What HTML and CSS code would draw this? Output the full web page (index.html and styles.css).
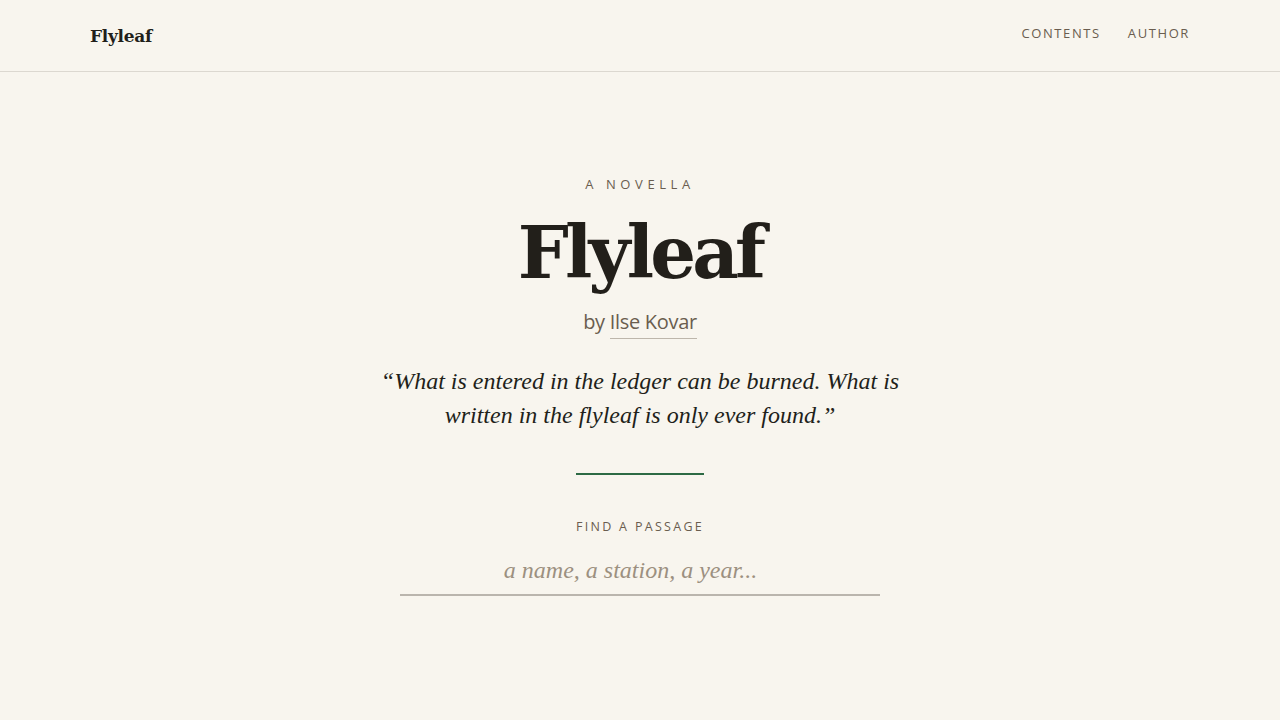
FILE: index.html
```html
<!DOCTYPE html>
<html lang="en">
<head>
<meta charset="utf-8">
<title>Flyleaf</title>
<link rel="stylesheet" href="styles.css">
</head>
<body>
<header class="site-header">
  <div class="header-inner">
    <a class="brand" href="#">Flyleaf</a>
    <nav class="nav">
      <a href="#">Contents</a>
      <a href="#">Author</a>
    </nav>
  </div>
</header>
<main class="hero">
  <p class="kicker">A Novella</p>
  <h1 class="title">Flyleaf</h1>
  <p class="byline">by <a href="#">Ilse Kovar</a></p>
  <blockquote class="epigraph">“What is entered in the ledger can be burned. What is written in the flyleaf is only ever found.”</blockquote>
  <hr class="rule">
  <label class="search-label" for="q">Find a passage</label>
  <input class="search" id="q" type="text" placeholder="a name, a station, a year...">
</main>
</body>
</html>
```
FILE: styles.css
```css
* { box-sizing: border-box; }
html, body { margin: 0; padding: 0; }
body {
  background: #f8f5ee;
  color: #221f1a;
  font-family: "Liberation Serif", "DejaVu Serif", serif;
  min-height: 720px;
}
a { color: inherit; text-decoration: none; }

.site-header {
  border-bottom: 1px solid #dcd8d0;
}
.header-inner {
  max-width: 1100px;
  margin: 0 auto;
  height: 71px;
  display: flex;
  align-items: center;
  justify-content: space-between;
}
.brand {
  font-family: "DejaVu Serif", serif;
  font-weight: bold;
  font-size: 17px;
  color: #221f1a;
  letter-spacing: -0.3px;
}
.nav {
  display: flex;
  gap: 27px;
  margin-top: -6px;
}
.nav a {
  font-family: "Open Sans", sans-serif;
  font-size: 13px;
  letter-spacing: 1.6px;
  text-transform: uppercase;
  color: #6a5d4f;
}

.hero {
  display: flex;
  flex-direction: column;
  align-items: center;
  padding-top: 103px;
  text-align: center;
}
.kicker {
  margin: 0;
  font-family: "Open Sans", sans-serif;
  font-size: 13px;
  letter-spacing: 4.6px;
  text-transform: uppercase;
  color: #6a5d4f;
  line-height: 18px;
}
.title {
  margin: 10px 0 0;
  font-family: "DejaVu Serif", serif;
  font-weight: bold;
  font-size: 72px;
  line-height: 100px;
  letter-spacing: -3.8px;
  color: #221f1a;
}
.byline {
  margin: 5px 0 0;
  font-family: "Open Sans", sans-serif;
  font-size: 20px;
  line-height: 28px;
  color: #6a5d4f;
  letter-spacing: -0.3px;
}
.byline a {
  border-bottom: 1px solid #bdb6ab;
  padding-bottom: 3px;
}
.epigraph {
  margin: 28px 0 0;
  max-width: 540px;
  font-style: italic;
  font-size: 24px;
  line-height: 34px;
  color: #221f1a;
}
.rule {
  width: 128px;
  margin: 41px 0 0;
  border: 0;
  height: 2px;
  background: #2d6a44;
}
.search-label {
  margin-top: 43px;
  font-family: "Open Sans", sans-serif;
  font-size: 12.5px;
  letter-spacing: 2.3px;
  text-transform: uppercase;
  color: #6a5d4f;
}
.search {
  margin-top: 18px;
  width: 480px;
  border: 0;
  border-bottom: 2px solid #bab5ad;
  background: transparent;
  font-family: "Liberation Serif", serif;
  font-style: italic;
  font-size: 24px;
  text-align: center;
  padding: 4px 19px 10px 0;
  color: #221f1a;
  outline: none;
}
.search::placeholder {
  color: #9c9080;
}
```
